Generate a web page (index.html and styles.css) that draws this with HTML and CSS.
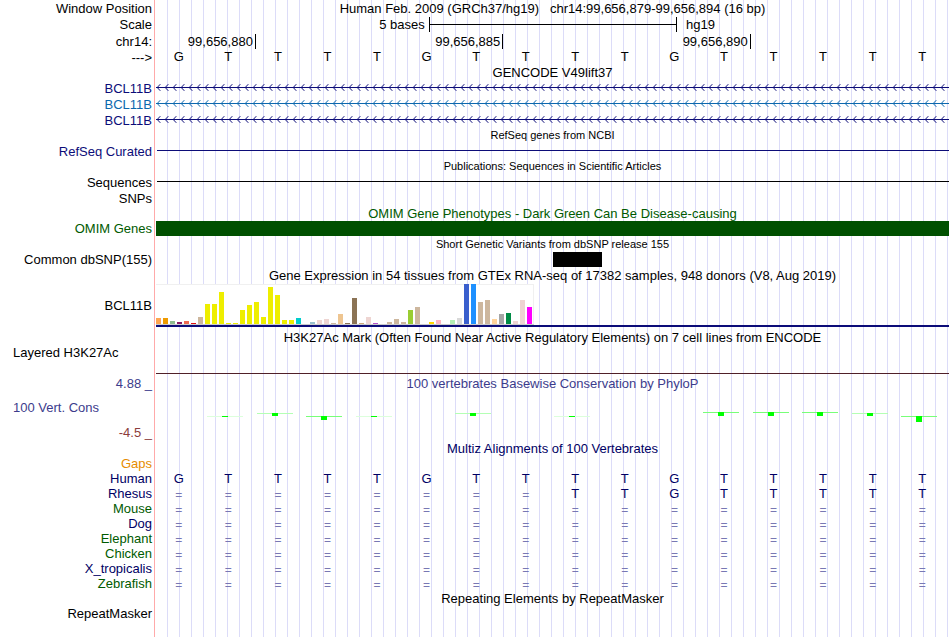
FILE: index.html
```html
<!DOCTYPE html>
<html lang="en">
<head>
<meta charset="utf-8">
<title>chr14:99,656,879-99,656,894 - Genome Browser</title>
<link rel="stylesheet" href="styles.css">
</head>
<body>
<main class="browser">
  <svg class="defs" width="0" height="0" aria-hidden="true">
    <defs>
      <pattern id="arrow-navy" width="8" height="8" patternUnits="userSpaceOnUse">
        <path d="M0 3.5H8M4.3 0.2L1.2 3.5L4.3 6.8" fill="none" stroke="#0c0c78"/>
      </pattern>
      <pattern id="arrow-blue" width="8" height="8" patternUnits="userSpaceOnUse">
        <path d="M0 3.5H8M4.3 0.2L1.2 3.5L4.3 6.8" fill="none" stroke="#0c68ae"/>
      </pattern>
    </defs>
  </svg>

  <div class="row"><div class="label">Window Position</div><h1 class="title">Human Feb. 2009 (GRCh37/hg19) &nbsp; chr14:99,656,879-99,656,894 (16 bp)</h1></div>
  <div class="row row-scale"><div class="label">Scale</div>
    <div class="scale"><span class="scale-size">5 bases</span><span class="scale-bar"></span><span class="scale-db">hg19</span></div>
  </div>
  <div class="row"><div class="label">chr14:</div>
    <div class="ruler"><span class="tick">99,656,880</span><span class="tick">99,656,885</span><span class="tick">99,656,890</span></div>
  </div>
  <table class="bases bases-ruler">
    <tr><th scope="row">---&gt;</th><td>G</td><td>T</td><td>T</td><td>T</td><td>T</td><td>G</td><td>T</td><td>T</td><td>T</td><td>T</td><td>G</td><td>T</td><td>T</td><td>T</td><td>T</td><td>T</td></tr>
  </table>

  <div class="row row-head"><h2 class="title">GENCODE V49lift37</h2></div>
  <div class="row"><div class="label navy">BCL11B</div><svg class="gene" width="100%" height="8"><rect width="100%" height="8" fill="url(#arrow-navy)"/></svg></div>
  <div class="row"><div class="label blue">BCL11B</div><svg class="gene" width="100%" height="8"><rect width="100%" height="8" fill="url(#arrow-blue)"/></svg></div>
  <div class="row"><div class="label navy">BCL11B</div><svg class="gene" width="100%" height="8"><rect width="100%" height="8" fill="url(#arrow-navy)"/></svg></div>

  <div class="row row-head"><h2 class="title small">RefSeq genes from NCBI</h2></div>
  <div class="row"><div class="label navy">RefSeq Curated</div><div class="line line-navy"></div></div>
  <div class="row row-head"><h2 class="title small">Publications: Sequences in Scientific Articles</h2></div>
  <div class="row"><div class="label">Sequences</div><div class="line"></div></div>
  <div class="row"><div class="label">SNPs</div></div>

  <div class="row row-head"><h2 class="title green">OMIM Gene Phenotypes - Dark Green Can Be Disease-causing</h2></div>
  <div class="row row-head"><div class="label green">OMIM Genes</div><div class="block-full"></div></div>
  <div class="row"><h2 class="title small">Short Genetic Variants from dbSNP release 155</h2></div>
  <div class="row row-head"><div class="label">Common dbSNP(155)</div><div class="snp-track"><div class="snp"></div></div></div>

  <div class="row row-gtex-head"><h2 class="title">Gene Expression in 54 tissues from GTEx RNA-seq of 17382 samples, 948 donors (V8, Aug 2019)</h2></div>
  <div class="row row-gtex"><div class="label">BCL11B</div>
    <div class="gtex">
      <div class="bars">
        <i style="height:6px;background:#ffa54f"></i><i style="height:6px;background:#ee9a00"></i><i style="height:3px;background:#8fbc8f"></i><i style="height:2px;background:#8b1c62"></i><i style="height:3px;background:#ee6a50"></i><i style="height:1px;background:#e01010"></i><i style="height:7px;background:#cdb79e"></i>
        <i style="height:20px;background:#eeee00"></i><i style="height:20px;background:#eeee00"></i><i style="height:32px;background:#eeee00"></i><i style="height:1px;background:#eeee00"></i><i style="height:1px;background:#eeee00"></i><i style="height:14px;background:#eeee00"></i><i style="height:19px;background:#eeee00"></i><i style="height:22px;background:#eeee00"></i><i style="height:7px;background:#eeee00"></i><i style="height:37px;background:#eeee00"></i><i style="height:29px;background:#eeee00"></i><i style="height:4px;background:#eeee00"></i><i style="height:4px;background:#eeee00"></i>
        <i style="height:6px;background:#00cdcd"></i><i style="height:0"></i><i style="height:2px;background:#9ac0cd"></i><i style="height:4px;background:#eed5d2"></i><i style="height:5px;background:#eed5d2"></i><i style="height:1px;background:#cdb79e"></i><i style="height:10px;background:#eec591"></i><i style="height:1px;background:#8b7355"></i><i style="height:26px;background:#8b7355"></i><i style="height:1px;background:#cdaa7d"></i><i style="height:7px;background:#eed5d2"></i><i style="height:1px;background:#b452cd"></i><i style="height:0"></i>
        <i style="height:2px;background:#cdb79e"></i><i style="height:5px;background:#cdb79e"></i><i style="height:2px;background:#cdb79e"></i><i style="height:14px;background:#9acd32"></i><i style="height:17px;background:#cdb79e"></i><i style="height:0"></i><i style="height:2px;background:#ffd700"></i><i style="height:4px;background:#ffb6c1"></i><i style="height:0"></i><i style="height:4px;background:#b4eeb4"></i><i style="height:6px;background:#d9d9d9"></i><i style="height:40px;background:#3a5fcd"></i><i style="height:40px;background:#1e90ff"></i><i style="height:22px;background:#cdb79e"></i><i style="height:24px;background:#cdb79e"></i><i style="height:5px;background:#ffd39b"></i><i style="height:10px;background:#a6a6a6"></i><i style="height:11px;background:#008b45"></i><i style="height:3px;background:#eed5d2"></i><i style="height:24px;background:#eed5d2"></i><i style="height:17px;background:#ff00ff"></i>
      </div>
    </div>
  </div>

  <div class="row row-layered-head"><h2 class="title">H3K27Ac Mark (Often Found Near Active Regulatory Elements) on 7 cell lines from ENCODE</h2></div>
  <div class="row row-layered"><div class="label label-left">Layered H3K27Ac</div><div class="layered"></div></div>

  <div class="row"><div class="label violet">4.88 _</div><h2 class="title violet">100 vertebrates Basewise Conservation by PhyloP</h2></div>
  <div class="row row-cons"><div class="label label-left violet">100 Vert. Cons</div>
    <div class="cons">
      <span></span><span class="mark faint"><b></b></span><span class="mark up pale"><b></b></span><span class="mark mid"><b></b></span><span class="mark faint"><b></b></span><span></span><span class="mark up pale"><b></b></span><span></span><span class="mark faint"><b></b></span><span></span><span></span><span class="mark top mid"><b></b></span><span class="mark top mid"><b></b></span><span class="mark top mid"><b></b></span><span class="mark up pale"><b></b></span><span class="mark tall"><b></b></span>
    </div>
  </div>
  <div class="row"><div class="label maroon">-4.5 _</div></div>

  <div class="row"><h2 class="title deep">Multiz Alignments of 100 Vertebrates</h2></div>
  <table class="bases species">
    <tr><th scope="row" class="orange">Gaps</th><td></td><td></td><td></td><td></td><td></td><td></td><td></td><td></td><td></td><td></td><td></td><td></td><td></td><td></td><td></td><td></td></tr>
    <tr><th scope="row">Human</th><td>G</td><td>T</td><td>T</td><td>T</td><td>T</td><td>G</td><td>T</td><td>T</td><td>T</td><td>T</td><td>G</td><td>T</td><td>T</td><td>T</td><td>T</td><td>T</td></tr>
    <tr><th scope="row">Rhesus</th><td class="eq">=</td><td class="eq">=</td><td class="eq">=</td><td class="eq">=</td><td class="eq">=</td><td class="eq">=</td><td class="eq">=</td><td class="eq">=</td><td>T</td><td>T</td><td>G</td><td>T</td><td>T</td><td>T</td><td>T</td><td>T</td></tr>
    <tr class="gap"><th scope="row" class="green">Mouse</th><td>=</td><td>=</td><td>=</td><td>=</td><td>=</td><td>=</td><td>=</td><td>=</td><td>=</td><td>=</td><td>=</td><td>=</td><td>=</td><td>=</td><td>=</td><td>=</td></tr>
    <tr class="gap"><th scope="row">Dog</th><td>=</td><td>=</td><td>=</td><td>=</td><td>=</td><td>=</td><td>=</td><td>=</td><td>=</td><td>=</td><td>=</td><td>=</td><td>=</td><td>=</td><td>=</td><td>=</td></tr>
    <tr class="gap"><th scope="row" class="green">Elephant</th><td>=</td><td>=</td><td>=</td><td>=</td><td>=</td><td>=</td><td>=</td><td>=</td><td>=</td><td>=</td><td>=</td><td>=</td><td>=</td><td>=</td><td>=</td><td>=</td></tr>
    <tr class="gap"><th scope="row" class="green">Chicken</th><td>=</td><td>=</td><td>=</td><td>=</td><td>=</td><td>=</td><td>=</td><td>=</td><td>=</td><td>=</td><td>=</td><td>=</td><td>=</td><td>=</td><td>=</td><td>=</td></tr>
    <tr class="gap"><th scope="row">X_tropicalis</th><td>=</td><td>=</td><td>=</td><td>=</td><td>=</td><td>=</td><td>=</td><td>=</td><td>=</td><td>=</td><td>=</td><td>=</td><td>=</td><td>=</td><td>=</td><td>=</td></tr>
    <tr class="gap"><th scope="row" class="green">Zebrafish</th><td>=</td><td>=</td><td>=</td><td>=</td><td>=</td><td>=</td><td>=</td><td>=</td><td>=</td><td>=</td><td>=</td><td>=</td><td>=</td><td>=</td><td>=</td><td>=</td></tr>
  </table>

  <div class="row row-head"><h2 class="title">Repeating Elements by RepeatMasker</h2></div>
  <div class="row row-head"><div class="label">RepeatMasker</div></div>
</main>
</body>
</html>
```
FILE: styles.css
```css
* { box-sizing: border-box; }

body {
  margin: 0;
  background: #fff;
  color: #000;
  font: 13px/15px "Liberation Sans", Arial, sans-serif;
}

/* Guide lines repeat every 12px; the label column is masked in white. */
.browser {
  min-height: 100vh;
  background:
    linear-gradient(#fff, #fff) 0 0 / 154px 100% no-repeat,
    linear-gradient(#ffaaaa, #ffaaaa) 154px 0 / 1px 100% no-repeat,
    linear-gradient(#fff, #fff) 155px 0 / 8px 100% no-repeat,
    linear-gradient(90deg, #dcdcf8 1px, transparent 1px) 167px 0 / 12px 100% repeat-x;
}

.defs { display: block; }

.row {
  display: grid;
  grid-template-columns: 154px 1fr;
  column-gap: 2px;
  align-items: center;
  min-height: 16px;
  padding-right: 1px;
}
.row > * { grid-column: 2; }
.row > .label { grid-column: 1; }
.row-head { min-height: 15px; }

.label { padding-right: 2px; text-align: right; white-space: nowrap; }
.label-left { padding-left: 13px; text-align: left; }

.title {
  margin: 0;
  font-size: 13px;
  font-weight: normal;
  text-align: center;
}
.small { font-size: 11px; }

.navy { color: #0c0c78; }
.blue { color: #0c68ae; }
.green { color: #005a00; }
.violet { color: #3c3c8c; }
.maroon { color: #8c3c3c; }
.deep { color: #000064; }
.orange { color: #e68c00; }

/* Scale and position ruler */
.row-scale { min-height: 17px; }
.scale {
  display: grid;
  grid-template-columns: 34.4% 31.3% 1fr;
  align-items: center;
}
.scale-size { padding-right: 4px; text-align: right; }
.scale-db { padding-left: 9px; }
.scale-bar {
  height: 15px;
  border: solid #000;
  border-width: 0 1px;
  background: linear-gradient(#000, #000) 0 7px / 100% 1px no-repeat;
}
.ruler { display: grid; grid-template-columns: 12.6% 31.2% 31.2%; }
.tick {
  justify-self: end;
  padding-right: 2px;
  border-right: 1px solid #000;
}

/* Base letters */
.bases {
  width: calc(100% - 3px);
  table-layout: fixed;
  border-collapse: collapse;
}
.bases th {
  width: 154px;
  padding: 0 2px 0 0;
  font-weight: normal;
  text-align: right;
}
.bases td { padding: 0; text-align: center; }
.bases-ruler th { padding-top: 1px; }
.bases-ruler td { vertical-align: top; }
.species { color: #000064; }
.species .green { color: #005a00; }
.species .orange { color: #e68c00; }
.species .gap td,
.species .eq {
  padding-top: 3px;
  color: #7878b4;
  font-size: 12px;
  line-height: 12px;
}

/* Feature tracks */
.gene { display: block; }
.line { align-self: start; height: 1px; margin: 7px 0 0 1px; background: #000; }
.line-navy { background: #0c0c78; }
.block-full { height: 15px; background: #005000; }
.snp-track { display: grid; grid-template-columns: 50% 49px; }
.snp { grid-column: 2; height: 15px; background: #000; }

/* Expression chart */
.row-gtex-head { min-height: 17px; }
.row-gtex { min-height: 43px; }
.gtex { border-bottom: 2px solid #0c0c78; }
.bars {
  display: flex;
  align-items: flex-end;
  gap: 2px;
  width: max-content;
  height: 41px;
  border-bottom: 1px solid #ccc;
  background: #fff;
  box-shadow: inset -1px 1px #f0f0f0;
  padding-right: 2px;
}
.bars i { width: 5px; }

.row-layered-head { min-height: 18px; align-items: end; }
.row-layered { min-height: 30px; align-items: start; }
.layered { height: 29px; border-bottom: 1px solid #502028; }

/* Conservation wiggle */
.row-cons { min-height: 33px; }
.cons {
  display: grid;
  grid-template-columns: repeat(16, 1fr);
  justify-items: center;
  align-items: start;
  align-self: end;
  height: 15px;
  margin: 0 5px 0 -5px;
}
.mark {
  display: flex;
  justify-content: center;
  width: 36px;
  margin-top: 7px;
  background: linear-gradient(#78ff78, #78ff78) 0 0 / 100% 1px no-repeat;
}
.mark b { width: 6px; height: 4px; background: #00ff00; }
.faint { background-image: linear-gradient(#dcffdc, #dcffdc); }
.faint b { height: 1px; }
.pale { background-image: linear-gradient(#b4ffb4, #b4ffb4); }
.up { margin-top: 4px; }
.up b { height: 3px; }
.top { margin-top: 3px; }
.tall b { height: 6px; }
```
